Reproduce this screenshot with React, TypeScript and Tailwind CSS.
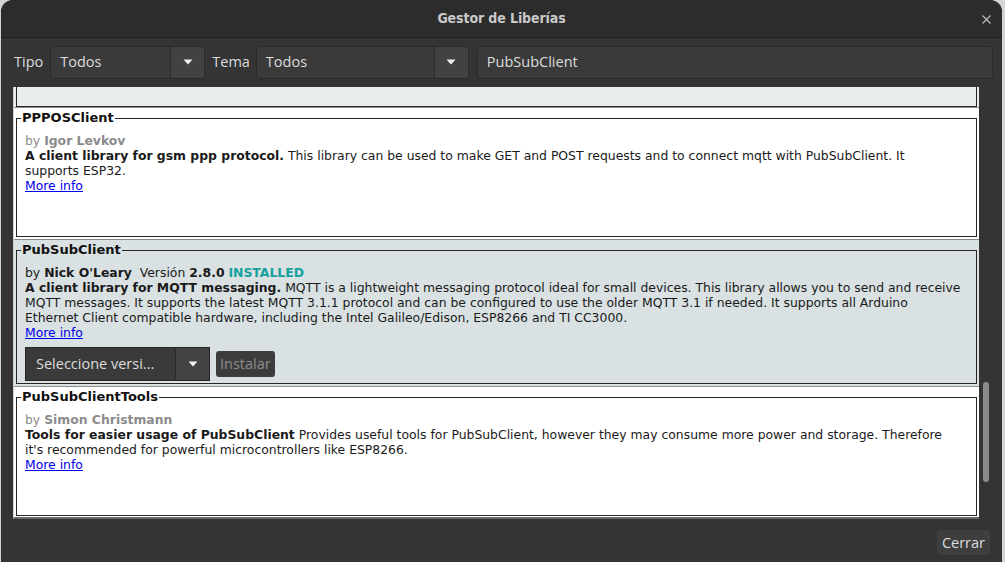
import React from "react";

const ui = { fontFamily: "'Open Sans', 'Noto Sans', sans-serif" };
const body = { fontFamily: "'DejaVu Sans', 'Liberation Sans', sans-serif" };

function Arrow() {
  return (
    <svg width="10" height="6" viewBox="0 0 10 6">
      <path d="M0.5 0.5 L9.5 0.5 L5 5.5 Z" fill="#f2f2f2" />
    </svg>
  );
}

function Combo({ value, width }: { value: string; width: string }) {
  return (
    <div
      className={`${width} h-[33px] flex items-stretch rounded-[3px] border border-[#2a2a2a] bg-[#3a3a3a]`}
    >
      <div className="flex-1 flex items-center pl-[9px] text-[14.5px] text-[#dcdcdc]">{value}</div>
      <div className="w-[34px] flex items-center justify-center border-l border-[#2c2c2c] bg-[#424242] rounded-r-[3px]">
        <Arrow />
      </div>
    </div>
  );
}

type Lib = {
  name: string;
  author: string;
  selected?: boolean;
  version?: string;
  lead: string;
  lines: string[];
};

// description lines, wrapped where the original dialog wraps them
const libs: Lib[] = [
  {
    name: "PPPOSClient",
    author: "Igor Levkov",
    lead: "A client library for gsm ppp protocol.",
    lines: [
      "This library can be used to make GET and POST requests and to connect mqtt with PubSubClient. It",
      "supports ESP32.",
    ],
  },
  {
    name: "PubSubClient",
    author: "Nick O'Leary",
    selected: true,
    version: "2.8.0",
    lead: "A client library for MQTT messaging.",
    lines: [
      "MQTT is a lightweight messaging protocol ideal for small devices. This library allows you to send and receive",
      "MQTT messages. It supports the latest MQTT 3.1.1 protocol and can be configured to use the older MQTT 3.1 if needed. It supports all Arduino",
      "Ethernet Client compatible hardware, including the Intel Galileo/Edison, ESP8266 and TI CC3000.",
    ],
  },
  {
    name: "PubSubClientTools",
    author: "Simon Christmann",
    lead: "Tools for easier usage of PubSubClient",
    lines: [
      "Provides useful tools for PubSubClient, however they may consume more power and storage. Therefore",
      "it's recommended for powerful microcontrollers like ESP8266.",
    ],
  },
];

function LibItem({ lib }: { lib: Lib }) {
  return (
    <div
      className={`px-[2px] pt-[1px] pb-[2px] border-b border-[#8e8e8e] ${
        lib.selected ? "bg-[#d9e1e2]" : "bg-white"
      }`}
    >
      <fieldset className="border border-[#262626] px-[8px] pb-[2px] m-0">
        <legend className="-ml-[4px] px-[1px] text-[13px] font-bold leading-[18px] text-[#111]">
          {lib.name}
        </legend>
        <div className="pt-[6px] text-[12.4px] leading-[15px] text-[#1a1a1a] whitespace-nowrap">
          {lib.selected ? (
            <div>
              by <b>{lib.author}</b>&nbsp; Versión <b>{lib.version}</b>{" "}
              <b className="text-[#13a09e]">INSTALLED</b>
            </div>
          ) : (
            <div className="text-[#8b8b8b]">
              by <b>{lib.author}</b>
            </div>
          )}
          {lib.lines.map((line, i) => (
            <div key={i}>
              {i === 0 && (
                <>
                  <b>{lib.lead}</b>{" "}
                </>
              )}
              {line}
            </div>
          ))}
          <div>
            <span className="text-[#0000ee] underline">More info</span>
          </div>
        </div>
        <div className="mt-[7px] h-[34px] flex items-center gap-[6px]">
          {lib.selected && (
            <>
              <div
                className="w-[185px] h-[34px] flex items-stretch border border-[#262626] bg-[#3a3a3a]"
                style={ui}
              >
                <div className="flex-1 flex items-center pl-[10px] text-[14.5px] text-[#dedede]">
                  Seleccione versi...
                </div>
                <div className="w-[34px] flex items-center justify-center border-l border-[#2c2c2c] bg-[#444444]">
                  <Arrow />
                </div>
              </div>
              <div
                className="h-[26px] px-[4px] flex items-center rounded-[3px] bg-[#3c3c3c] text-[14.5px] text-[#8c8c8c]"
                style={ui}
              >
                Instalar
              </div>
            </>
          )}
        </div>
      </fieldset>
    </div>
  );
}

export default function App() {
  return (
    <div className="w-[1005px] h-[562px] bg-[#d4d4d4] pl-[1px] pr-[3px] overflow-hidden">
      <div className="h-full bg-[#343434] rounded-t-[12px] flex flex-col" style={ui}>
        {/* title bar */}
        <div className="h-[38px] shrink-0 bg-[#2c2c2c] rounded-t-[12px] border-b border-[#1d1d1d] relative flex items-center justify-center">
          <span
            className="text-[14px] font-bold text-[#c9c9c9] tracking-[-0.1px]"
            style={{ fontFamily: "'DejaVu Sans Condensed', 'DejaVu Sans', sans-serif", fontStretch: "condensed" }}
          >
            Gestor de Liberías
          </span>
          <svg className="absolute right-[11px] top-[15px]" width="9" height="9" viewBox="0 0 9 9">
            <path d="M0.5 0.5 L8.5 8.5 M8.5 0.5 L0.5 8.5" stroke="#bdbdbd" strokeWidth="1.2" />
          </svg>
        </div>

        {/* filter bar */}
        <div className="flex items-center pt-[7px] pl-[13px] pr-[9px] h-[41px] shrink-0">
          <span className="text-[14.5px] text-[#dcdcdc] mr-[7px]">Tipo</span>
          <Combo value="Todos" width="w-[155px]" />
          <span className="text-[14.5px] text-[#dcdcdc] ml-[7px] mr-[6px]">Tema</span>
          <Combo value="Todos" width="w-[213px]" />
          <div className="ml-[8px] flex-1 h-[33px] flex items-center pl-[9px] rounded-[3px] border border-[#2a2a2a] bg-[#3a3a3a] text-[14.5px] text-[#dcdcdc]">
            PubSubClient
          </div>
        </div>

        {/* list */}
        <div className="mt-[8px] flex pl-[12px]">
          <div className="w-[966px] h-[432px] overflow-hidden bg-white border-l border-[#d0d0d0] border-b-2 border-b-[#6a6a6a]" style={body}>
            <div className="bg-[#e8eeee] px-[2px] border-b border-[#8e8e8e]">
              <div className="h-[20px] border-x border-b border-[#262626]" />
            </div>
            {libs.map((lib) => (
              <LibItem key={lib.name} lib={lib} />
            ))}
          </div>
          <div className="flex-1 relative">
            <div className="absolute left-[4px] top-[295px] w-[6px] h-[100px] rounded-full bg-[#8b8b8b]" />
          </div>
        </div>

        {/* footer */}
        <div className="flex-1 flex justify-end items-start pt-[11px] pr-[12px]">
          <div className="h-[25px] px-[5px] flex items-center rounded-[3px] bg-[#3e3e3e] text-[14.5px] text-[#dedede]">
            Cerrar
          </div>
        </div>
      </div>
    </div>
  );
}
